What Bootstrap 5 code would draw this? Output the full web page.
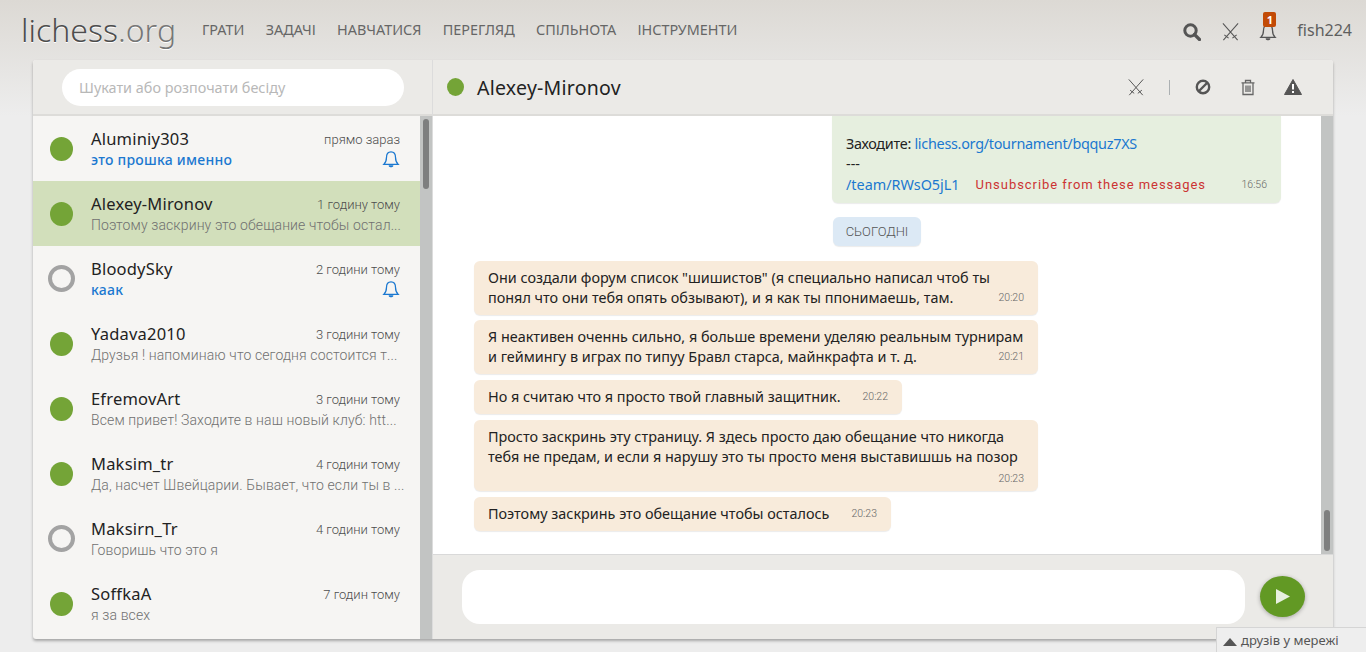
<!DOCTYPE html>
<html lang="uk"><head><meta charset="utf-8"><title>lichess</title>
<link rel="stylesheet" href="https://cdn.jsdelivr.net/npm/bootstrap@5.3.0/dist/css/bootstrap.min.css">
<style>
html,body{height:652px;overflow:hidden}
body{font-family:"Noto Sans",sans-serif;background:#ededed linear-gradient(to bottom,#dcd9d4,#ededed 116px) no-repeat;color:#4d4d4d;position:relative}
.topbar{height:60px;padding-left:21px;padding-right:14px}
.logo{font-size:32px;font-weight:300;line-height:58px;color:#4d4d4d;width:181px;text-shadow:0 1px 0 #fff}
.logo span{color:#777}
.menu{gap:21.3px;font-size:14.4px;color:#666;line-height:60px}
.tools{color:#555;padding-top:4px}
.tool-item{position:relative;line-height:0}
.count{position:absolute;left:4px;top:-11px;width:13px;height:15px;background:#c24a06;color:#fff;font-size:11px;font-weight:700;line-height:15px;text-align:center;border-radius:2px}
.user{font-size:16px;color:#5f5f5f;margin-left:20px;margin-top:-4px}
.shell{margin:0 33px;height:579px;border-radius:3px;box-shadow:0 2px 3px rgba(0,0,0,.3);overflow:hidden;background:#f6f5f3}
.side{width:400px;flex:none;border-right:1px solid #dcdcdc}
.main{width:900px;flex:none}
.bar{height:56px;background:#ebeae7;border-bottom:2px solid #dddcd9;flex:none}
.search{width:342px;height:37px;margin-left:29px;border-radius:19px;background:#fff;color:#b8b8b8;font-size:14.4px;line-height:37px;padding-left:17px}
.rows{height:523px;overflow:hidden}
.track{width:12px;flex:none;background:#c2c4c3;padding:3px 2px 3px;position:relative}
.thumb{width:6px;margin-left:1px;background:#7e7f7f;border-radius:4px}
.rowitem{height:65px;padding-left:17px;padding-right:20px;flex:none}
.rowitem.sel{background:#d2dfbb}
.dot{width:23px;height:24px;border-radius:50%;background:#74a437;flex:none}
.dot.off{width:27px;height:27px;margin-left:-2px;margin-right:-2px;background:none;border:4px solid #a3a3a3}
.rowbody{margin-left:18px;min-width:0;flex:1}
.name{font-size:16.5px;color:#222;line-height:22px;letter-spacing:.2px}
.when{font-family:Roboto,sans-serif;font-size:13px;font-weight:300;color:#4d4d4d;padding-top:2px}
.prev{font-family:Roboto,sans-serif;font-weight:300;font-size:14px;line-height:20px;color:#707070;white-space:nowrap;letter-spacing:.12px}
.prev.unread{font-family:"Noto Sans",sans-serif;font-weight:500;color:#1b78d0;letter-spacing:.25px}
.chatname{font-size:19.5px;color:#222;letter-spacing:.25px;margin-left:13px;padding-top:1px}
.head-dot{margin-left:14px;width:17px;height:18px}
.actions{margin-left:auto;color:#555}
.msgs{height:438px;background:#fff;overflow:hidden;flex:none}
.msgcol{flex:1;min-width:0;padding-left:41px;font-size:14.4px;color:#222;line-height:20px}
.bub{border-radius:6px;padding:7px 14px;box-shadow:0 1px 1px rgba(0,0,0,.08)}
.in{background:#f8ebdb;margin-bottom:6px;width:fit-content}
.wide{width:564px}
.first{margin-bottom:5px}
.mine{background:#e6efdf;width:449px;margin-left:358px;border-radius:0 0 6px 6px;margin-bottom:14px;height:87px}
.mine a{color:#1b78d0;text-decoration:none}
.mine .snug{letter-spacing:-.28px}
.tm{font-family:Roboto,sans-serif;font-weight:300;font-size:10.5px;color:#666;margin-left:22px;white-space:nowrap}
.unsub{font-family:Roboto,sans-serif;font-size:13px;color:#cc3333;letter-spacing:.95px;margin-left:16px}
.day{background:#dce9f5;color:#555;font-size:13px;font-weight:300;font-family:Roboto,sans-serif;border-radius:6px;width:88px;height:29px;line-height:29px;text-align:center;margin:0 0 15px 359px;box-shadow:0 1px 1px rgba(0,0,0,.08)}
.compose{height:85px;background:#ebeae7;border-top:1px solid #d9d9d9;padding-left:29px;flex:none}
.typing{width:783px;height:54px;background:#fff;border-radius:18px}
.send{width:45px;height:41px;border-radius:50%;background:#629924;margin-left:15px;margin-bottom:2px;box-shadow:0 1px 4px rgba(0,0,0,.3)}
.friends{position:absolute;right:0;bottom:0;width:150px;height:25px;background:#eeeeee;border:1px solid #d5d5d5;border-right:0;border-bottom:0;font-size:13px;line-height:24px;color:#555;padding-left:6px;z-index:2}
</style></head><body>
<svg width="0" height="0" class="d-block position-absolute"><defs>
<symbol id="sw" viewBox="0 0 20 20"><path d="M2 1 17.500 18.500M18 1 2.500 18.500M12 16.500l4.500-3.500M8 16.500 3.500 13" fill="none" stroke="currentColor" stroke-width="1.100"/></symbol>
<symbol id="bell" viewBox="0 0 20 20"><path d="M10 1.500c3.500 0 5 2.600 5 6 0 4 1 6 3 8H2c2-2 3-4 3-8 0-3.400 1.500-6 5-6z" fill="none" stroke="currentColor" stroke-width="1.400"/><path d="M7.500 16.500h5v1c-1 1.600-4 1.600-5 0z" fill="currentColor"/></symbol>
</defs></svg>
<header class="topbar d-flex align-items-center">
<div class="logo">lichess<span>.org</span></div>
<nav class="menu d-flex"><span>ГРАТИ</span><span>ЗАДАЧІ</span><span>НАВЧАТИСЯ</span><span>ПЕРЕГЛЯД</span><span>СПІЛЬНОТА</span><span>ІНСТРУМЕНТИ</span></nav>
<div class="tools d-flex align-items-center ms-auto">
<svg width="18" height="18" viewBox="0 0 18 18" style="margin-right:20px"><circle cx="7.500" cy="7.500" r="5.700" fill="none" stroke="#555" stroke-width="3"/><path d="m11.500 11.500 5 5" stroke="#555" stroke-width="3.200" stroke-linecap="round"/></svg>
<svg width="19" height="20" style="margin-right:19px"><use href="#sw"/></svg>
<div class="tool-item"><svg width="18" height="19"><use href="#bell"/></svg><div class="count">1</div></div>
<div class="user">fish224</div>
</div>
</header>
<div class="shell d-flex">
<aside class="side d-flex flex-column">
<div class="bar d-flex align-items-center"><div class="search">Шукати або розпочати бесіду</div></div>
<div class="rows d-flex">
<div class="flex-grow-1 d-flex flex-column" style="min-width:0">
<div class="rowitem d-flex align-items-center"><div class="dot"></div><div class="rowbody"><div class="d-flex justify-content-between align-items-center"><span class="name">Aluminiy303</span><span class="when">прямо зараз</span></div><div class="d-flex justify-content-between"><div class="prev unread">это прошка именно</div><svg width="18" height="19" style="color:#1b78d0"><use href="#bell"/></svg></div></div></div>
<div class="rowitem sel d-flex align-items-center"><div class="dot"></div><div class="rowbody"><div class="d-flex justify-content-between align-items-center"><span class="name">Alexey-Mironov</span><span class="when">1 годину тому</span></div><div class="prev">Поэтому заскрину это обещание чтобы остал...</div></div></div>
<div class="rowitem d-flex align-items-center"><div class="dot off"></div><div class="rowbody"><div class="d-flex justify-content-between align-items-center"><span class="name">BloodySky</span><span class="when">2 години тому</span></div><div class="d-flex justify-content-between"><div class="prev unread">каак</div><svg width="18" height="19" style="color:#1b78d0"><use href="#bell"/></svg></div></div></div>
<div class="rowitem d-flex align-items-center"><div class="dot"></div><div class="rowbody"><div class="d-flex justify-content-between align-items-center"><span class="name">Yadava2010</span><span class="when">3 години тому</span></div><div class="prev">Друзья ! напоминаю что сегодня состоится т...</div></div></div>
<div class="rowitem d-flex align-items-center"><div class="dot"></div><div class="rowbody"><div class="d-flex justify-content-between align-items-center"><span class="name">EfremovArt</span><span class="when">3 години тому</span></div><div class="prev">Всем привет! Заходите в наш новый клуб: htt...</div></div></div>
<div class="rowitem d-flex align-items-center"><div class="dot"></div><div class="rowbody"><div class="d-flex justify-content-between align-items-center"><span class="name">Maksim_tr</span><span class="when">4 години тому</span></div><div class="prev">Да, насчет Швейцарии. Бывает, что если ты в ...</div></div></div>
<div class="rowitem d-flex align-items-center"><div class="dot off"></div><div class="rowbody"><div class="d-flex justify-content-between align-items-center"><span class="name">Maksirn_Tr</span><span class="when">4 години тому</span></div><div class="prev">Говоришь что это я</div></div></div>
<div class="rowitem d-flex align-items-center"><div class="dot"></div><div class="rowbody"><div class="d-flex justify-content-between align-items-center"><span class="name">SoffkaA</span><span class="when">7 годин тому</span></div><div class="prev">я за всех</div></div></div>
</div>
<div class="track"><div class="thumb" style="height:70px"></div></div>
</div>
</aside>
<main class="main d-flex flex-column">
<div class="bar d-flex align-items-center"><div class="dot head-dot"></div><div class="chatname">Alexey-Mironov</div>
<div class="actions d-flex align-items-center">
<svg width="18" height="19"><use href="#sw"/></svg>
<span class="bg-secondary opacity-50" style="width:1px;height:15px;margin:0 25px 0 24px"></span>
<svg width="16" height="16" viewBox="0 0 16 16"><circle cx="8" cy="8" r="6.200" fill="none" stroke="#555" stroke-width="2.400"/><path d="M3.500 12.500l9-9" stroke="#555" stroke-width="2.400"/></svg>
<svg width="16" height="17" viewBox="0 0 16 17" style="margin-left:29px"><path d="M1.500 3.800h13M5.500 3.500V1.500h5v2M3 4v11.500h10V4M6 6.500v6.500M8 6.500v6.500M10 6.500v6.500" fill="none" stroke="#666" stroke-width="1.300"/></svg>
<svg width="18" height="16" viewBox="0 0 18 16" style="margin-left:28px;margin-right:31px"><path d="M9 .5 17.500 15.500H.5z" fill="#555" stroke="#555" stroke-linejoin="round"/><path d="M8 5h2v5.500H8zM8 12h2v2H8z" fill="#fff"/></svg>
</div></div>
<div class="msgs d-flex">
<div class="msgcol">
<div class="bub mine"><div style="height:11px"></div><div class="snug">Заходите: <a href="#">lichess.org/tournament/bqquz7XS</a></div><div>---</div><div class="d-flex align-items-center" style="padding-top:1px"><a href="#">/team/RWsO5jL1</a><span class="unsub">Unsubscribe from these messages</span><span class="tm ms-auto">16:56</span></div></div>
<div class="day">СЬОГОДНІ</div>
<div class="bub in wide first"><div>Они создали форум список "шишистов" (я специально написал чтоб ты</div><div class="d-flex justify-content-between">понял что они тебя опять обзывают), и я как ты ппонимаешь, там.<span class="tm">20:20</span></div></div>
<div class="bub in wide"><div>Я неактивен оченнь сильно, я больше времени уделяю реальным турнирам</div><div class="d-flex justify-content-between">и геймингу в играх по типуу Бравл старса, майнкрафта и т. д.<span class="tm">20:21</span></div></div>
<div class="bub in d-flex align-items-center">Но я считаю что я просто твой главный защитник.<span class="tm">20:22</span></div>
<div class="bub in wide"><div>Просто заскринь эту страницу. Я здесь просто даю обещание что никогда</div><div>тебя не предам, и если я нарушу это ты просто меня выставишшь на позор</div><div class="text-end" style="height:17px"><span class="tm">20:23</span></div></div>
<div class="bub in d-flex align-items-center">Поэтому заскринь это обещание чтобы осталось<span class="tm">20:23</span></div>
</div>
<div class="track d-flex flex-column justify-content-end"><div class="thumb" style="height:41px"></div></div>
</div>
<div class="compose d-flex align-items-center"><div class="typing"></div><div class="send d-flex align-items-center justify-content-center"><svg width="15" height="15" viewBox="0 0 15 15"><path d="M1 0l14 7.500L1 15z" fill="#e8f0e0"/></svg></div></div>
</main>
</div>
<div class="friends"><svg width="14" height="8" viewBox="0 0 14 8" class="me-1"><path d="M7 0l7 8H0z" fill="#555"/></svg>друзів у мережі</div>
</body></html>
